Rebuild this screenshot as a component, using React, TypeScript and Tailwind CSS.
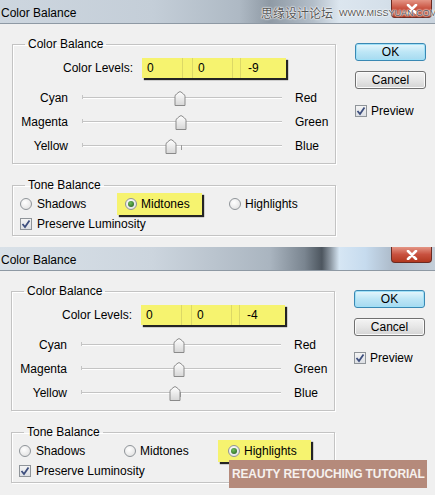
import React from "react";

type DialogProps = {
  levels: [string, string, string];
  thumbs: [number, number, number];
  tone: "Shadows" | "Midtones" | "Highlights";
  shift: number;
  variant: 1 | 2;
};

const FONT = { fontFamily: '"Liberation Sans", Arial, sans-serif' };

function Thumb({ x }: { x: number }) {
  return (
    <svg
      width="12"
      height="15"
      viewBox="0 0 12 15"
      className="absolute top-[-7px]"
      style={{ left: x - 6 }}
    >
      <defs>
        <linearGradient id="tg" x1="0" y1="0" x2="0" y2="1">
          <stop offset="0" stopColor="#ffffff" />
          <stop offset="1" stopColor="#d6d6d6" />
        </linearGradient>
      </defs>
      <path
        d="M1 14.5 V5.5 Q1 4 2.5 3 L5 1 Q6 0.4 7 1 L9.5 3 Q11 4 11 5.5 V14.5 Z"
        fill="url(#tg)"
        stroke="#8a8a8a"
        strokeWidth="1"
      />
    </svg>
  );
}

function SliderRow({ left, right, thumb }: { left: string; right: string; thumb: number }) {
  return (
    <div className="flex h-[24px] items-center">
      <div className="w-[55px] text-right">{left}</div>
      <div className="relative ml-[14px] h-[2px] w-[200px] border-t border-[#c4c4c4] bg-white">
        <div className="absolute left-0 top-[-3px] h-[4px] w-px bg-[#c4c4c4]" />
        <div className="absolute left-[99px] top-[-1px] h-[5px] w-px bg-[#9a9a9a]" />
        <Thumb x={thumb} />
      </div>
      <div className="ml-[13px]">{right}</div>
    </div>
  );
}

function Radio({ on }: { on: boolean }) {
  return (
    <div className="flex h-[12px] w-[12px] items-center justify-center rounded-full border border-[#8f9499] bg-[radial-gradient(circle_at_40%_35%,#ffffff,#dcdcdc)]">
      {on && (
        <div className="h-[6px] w-[6px] rounded-full bg-[radial-gradient(circle_at_40%_35%,#6fbf5a,#1f5a1c)]" />
      )}
    </div>
  );
}

function Check() {
  return (
    <div className="flex h-[12px] w-[12px] items-center justify-center border border-[#8f9499] bg-[linear-gradient(#f4f4f4,#dcdfe4)]">
      <svg width="10" height="10" viewBox="0 0 10 10">
        <path d="M1.5 5 L4 8 L8.5 1.5" fill="none" stroke="#3e4f7e" strokeWidth="1.8" />
      </svg>
    </div>
  );
}

function TitleBar({ variant }: { variant: 1 | 2 }) {
  const bg =
    variant === 1
      ? "bg-[linear-gradient(to_right,#cdd6df_0%,#c4ced8_35%,#aeb9c4_55%,#8f9aa5_62%,#b3bec9_72%,#dce6ef_78%,#d5e0ea_88%,#c9d3dd_100%)]"
      : "bg-[linear-gradient(to_right,#d9e1e8_0%,#ccd5de_35%,#aab5c0_62%,#7a8590_70%,#4d565f_74%,#8d98a3_76%,#d6e6f4_78%,#c6dbee_84%,#aebccb_90%,#c4ced8_100%)]";
  return (
    <div className={`relative flex h-[24px] justify-between border-b border-[#8e99a4] ${bg}`}>
      <div className="pl-[1px] pt-[4px] text-[12px] text-black">Color Balance</div>
      <div
        className={`mr-[3px] flex w-[41px] items-center justify-center rounded-b-[4px] border border-t-0 border-[#6b2a22] bg-[linear-gradient(#e49585,#c8513f_50%,#b2381f)] ${
          variant === 1 ? "h-[18px]" : "h-[16px]"
        }`}
      >
        <svg width="12" height="10" viewBox="0 0 12 10">
          <path d="M2 1 L10 9 M10 1 L2 9" stroke="#ffffff" strokeWidth="2.6" strokeLinecap="round" />
        </svg>
      </div>
      {variant === 1 && (
        <div className="absolute left-[261px] top-[6px] z-10 flex items-end gap-[6px] whitespace-nowrap text-[#555555] [text-shadow:0_0_1px_#fff,0_0_2px_#fff,0_0_2px_#fff]">
          <span
            className="text-[12px] leading-[14px]"
            style={{ fontFamily: '"Noto Sans CJK SC", sans-serif' }}
          >
            思缘设计论坛
          </span>
          <span className="text-[9px] leading-[13px]">WWW.MISSYUAN.COM</span>
        </div>
      )}
    </div>
  );
}

function Dialog({ levels, thumbs, tone, shift, variant }: DialogProps) {
  return (
    <div>
      <TitleBar variant={variant} />
      <div className="flex bg-[#f0f0f0]" style={{ paddingLeft: 12 - shift }}>
        <div className="w-[324px]">
          <fieldset className="mt-[13px] h-[127px] border border-[#c3c3c3] shadow-[1px_1px_0_#ffffff,inset_1px_1px_0_#ffffff]">
            <legend className="ml-[12px] px-[3px] text-[12px] leading-[14px]">Color Balance</legend>
            <div className="mt-[7px] flex h-[20px] items-center">
              <div className="w-[120px] text-right">Color Levels:</div>
              <div className="ml-[9px] flex h-[20px] w-[144px] items-center bg-[#f6f36f] shadow-[2px_2px_1px_rgba(0,0,0,0.85)]">
                <div className="h-[20px] w-[41px] border-r border-[#dcd866] pl-[5px] leading-[20px]">{levels[0]}</div>
                <div className="ml-[9px] h-[20px] w-[41px] border-x border-[#dcd866] pl-[5px] leading-[20px]">{levels[1]}</div>
                <div className="ml-[7px] h-[20px] w-[44px] border-l border-[#dcd866] pl-[7px] leading-[20px]">{levels[2]}</div>
              </div>
            </div>
            <div className="mt-[8px]">
              <SliderRow left="Cyan" right="Red" thumb={thumbs[0]} />
              <SliderRow left="Magenta" right="Green" thumb={thumbs[1]} />
              <SliderRow left="Yellow" right="Blue" thumb={thumbs[2]} />
            </div>
          </fieldset>
          <fieldset className="mt-[14px] h-[58px] border border-[#c3c3c3] shadow-[1px_1px_0_#ffffff,inset_1px_1px_0_#ffffff]">
            <legend className="ml-[12px] px-[3px] text-[12px] leading-[14px]">Tone Balance</legend>
            <div className="mt-[2px] flex h-[20px] items-center">
              <div className="ml-[7px] flex w-[97px] items-center gap-[5px]">
                <Radio on={tone === "Shadows"} />
                <span>Shadows</span>
              </div>
              <div
                className={`flex h-[22px] w-[85px] items-center gap-[4px] pl-[8px] ${
                  tone === "Midtones" ? "bg-[#f6f36f] shadow-[2px_2px_1px_rgba(0,0,0,0.85)]" : ""
                }`}
              >
                <Radio on={tone === "Midtones"} />
                <span>Midtones</span>
              </div>
              <div
                className={`ml-[17px] flex h-[22px] w-[93px] items-center gap-[4px] pl-[10px] ${
                  tone === "Highlights" ? "bg-[#f6f36f] shadow-[2px_2px_1px_rgba(0,0,0,0.85)]" : ""
                }`}
              >
                <Radio on={tone === "Highlights"} />
                <span>Highlights</span>
              </div>
            </div>
            <div className="flex h-[20px] items-center gap-[5px] pl-[7px]">
              <Check />
              <span>Preserve Luminosity</span>
            </div>
          </fieldset>
        </div>
        <div className="ml-[19px] flex w-[71px] flex-col">
          <div className="mt-[19px] flex h-[18px] items-center justify-center rounded-[3px] border border-[#3a88b3] bg-[linear-gradient(#e6f6fc,#bde6f6_50%,#a6daf0)] shadow-[inset_0_0_0_1px_#9fe0f7]">
            OK
          </div>
          <div className="mt-[10px] flex h-[18px] items-center justify-center rounded-[3px] border border-[#707070] bg-[linear-gradient(#f4f4f4,#e6e6e6_50%,#d4d4d4)] shadow-[inset_0_0_0_1px_#fbfbfb]">
            Cancel
          </div>
          <div className="mt-[16px] flex h-[12px] items-center gap-[4px]">
            <Check />
            <span>Preview</span>
          </div>
        </div>
      </div>
    </div>
  );
}

export default function App() {
  return (
    <div className="relative h-[495px] w-[435px] overflow-hidden bg-[#f0f0f0] text-[12px] text-black" style={FONT}>
      <div className="h-[247px]">
        <Dialog levels={["0", "0", "-9"]} thumbs={[98, 99, 89]} tone="Midtones" shift={0} variant={1} />
      </div>
      <Dialog levels={["0", "0", "-4"]} thumbs={[98, 98, 94]} tone="Highlights" shift={1} variant={2} />
      <div className="absolute left-[229px] top-[460px] flex h-[28px] w-[198px] items-center whitespace-nowrap bg-[#b58a7b] pl-[3px] text-[12px] font-bold tracking-[-0.15px] text-[#f6f1ee]">
        REAUTY RETOUCHING TUTORIAL
      </div>
    </div>
  );
}
